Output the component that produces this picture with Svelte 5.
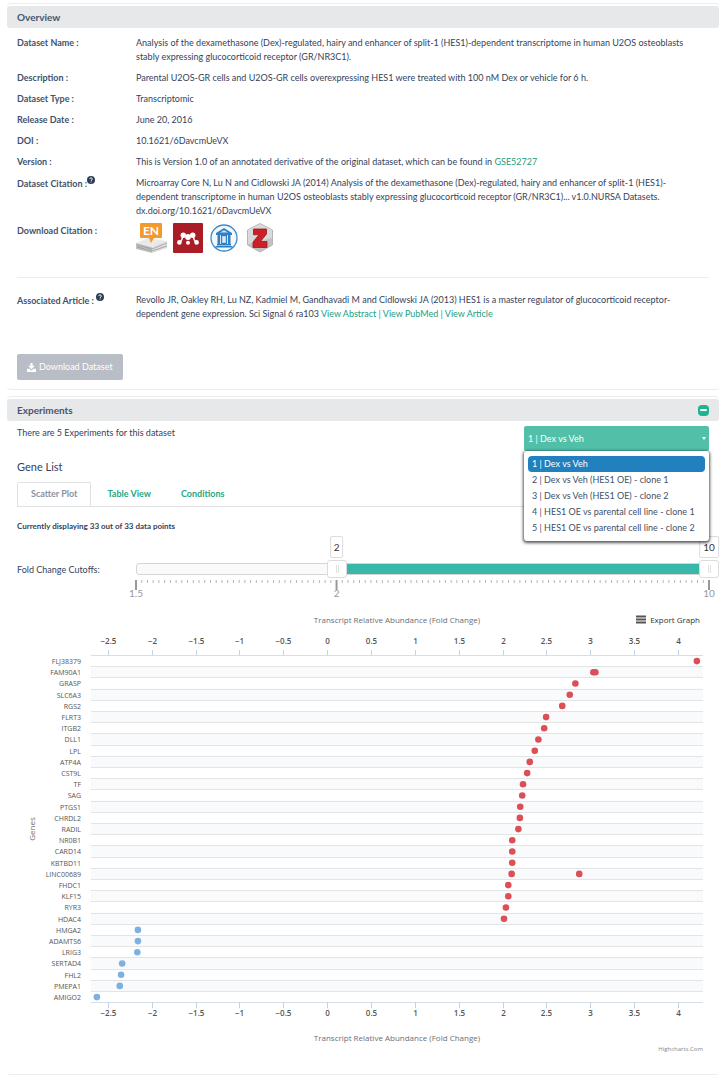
<script>
  let chartWidth = $state(691);
  let low = $state(35);
  let high = $state(100);
  let selected = $state(0);
  let tab = $state(0);
  let open = $state(true);

  const experiments = [
    '1 | Dex vs Veh',
    '2 | Dex vs Veh (HES1 OE) - clone 1',
    '3 | Dex vs Veh (HES1 OE) - clone 2',
    '4 | HES1 OE vs parental cell line - clone 1',
    '5 | HES1 OE vs parental cell line - clone 2'
  ];
  const tabs = ['Scatter Plot', 'Table View', 'Conditions'];

  const genes = [
    ['FLJ38379', [4.21]], ['FAM90A1', [3.03, 3.053]], ['GRASP', [2.825]], ['SLC6A3', [2.761]],
    ['RGS2', [2.675]], ['FLRT3', [2.491]], ['ITGB2', [2.469]], ['DLL1', [2.403]],
    ['LPL', [2.362]], ['ATP4A', [2.305]], ['CST9L', [2.275]], ['TF', [2.228]],
    ['SAG', [2.219]], ['PTGS1', [2.196]], ['CHRDL2', [2.192]], ['RADIL', [2.175]],
    ['NR0B1', [2.105]], ['CARD14', [2.105]], ['KBTBD11', [2.105]], ['LINC00689', [2.098, 2.869]],
    ['FHDC1', [2.06]], ['KLF15', [2.06]], ['RYR3', [2.033]], ['HDAC4', [2.011]],
    ['HMGA2', [-2.163]], ['ADAMTS6', [-2.163]], ['LRIG3', [-2.17]], ['SERTAD4', [-2.343]],
    ['FHL2', [-2.355]], ['PMEPA1', [-2.37]], ['AMIGO2', [-2.631]]
  ];
  const ticks = [-2.5, -2, -1.5, -1, -0.5, 0, 0.5, 1, 1.5, 2, 2.5, 3, 3.5, 4];
  const min = -2.698;
  const max = 4.28;
  const plotLeft = 74;
  const plotTop = 45;
  const rowHeight = 11.2;
  const plotBottom = plotTop + rowHeight * genes.length;

  let plotRight = $derived(chartWidth - 6);
  const x = (v, right) => plotLeft + ((v - min) / (max - min)) * (right - plotLeft);
  const label = (v) => String(v).replace('-', '−');
  const fold = (p) => (p <= 35 ? 1.5 + (p / 35) * 0.5 : 2 + ((p - 35) / 65) * 8);
  const short = (v) => String(Math.round(v * 10) / 10);
  const marks = Array.from({ length: 101 }, (_, i) => i);
</script>

{#snippet help()}
  <svg class="help" viewBox="0 0 16 16" aria-hidden="true">
    <circle cx="8" cy="8" r="8" fill="#2b3c55" />
    <path d="M5.4 6.2C5.4 3 10.7 3 10.7 6.1C10.7 8 8.2 8 8.2 9.8M8.2 11.2V13" fill="none" stroke="#fff" stroke-width="2" />
  </svg>
{/snippet}

<main>
  <section class="card">
    <header><h2>Overview</h2></header>
    <div class="body overview">
      <dl>
        <dt>Dataset Name :</dt>
        <dd>Analysis of the dexamethasone (Dex)-regulated, hairy and enhancer of split-1 (HES1)-dependent transcriptome in human U2OS osteoblasts stably expressing glucocorticoid receptor (GR/NR3C1).</dd>
        <dt>Description :</dt>
        <dd>Parental U2OS-GR cells and U2OS-GR cells overexpressing HES1 were treated with 100 nM Dex or vehicle for 6 h.</dd>
        <dt>Dataset Type :</dt>
        <dd>Transcriptomic</dd>
        <dt>Release Date :</dt>
        <dd>June 20, 2016</dd>
        <dt>DOI :</dt>
        <dd>10.1621/6DavcmUeVX</dd>
        <dt>Version :</dt>
        <dd>This is Version 1.0 of an annotated derivative of the original dataset, which can be found in <a href="#gse">GSE52727</a></dd>
        <dt>Dataset Citation :{@render help()}</dt>
        <dd>Microarray Core N, Lu N and Cidlowski JA (2014) Analysis of the dexamethasone (Dex)-regulated, hairy and enhancer of split-1 (HES1)-dependent transcriptome in human U2OS osteoblasts stably expressing glucocorticoid receptor (GR/NR3C1)... v1.0.NURSA Datasets. dx.doi.org/10.1621/6DavcmUeVX</dd>
      </dl>
      <dl class="downloads">
        <dt>Download Citation :</dt>
        <dd class="formats">
          <a href="#endnote" aria-label="EndNote">
            <svg viewBox="0 0 32 32">
              <path d="M0 21L12 16L31 19L19 25Z" fill="#e9e9e9" />
              <path d="M0 21L16 25V31L0 27Z" fill="#bfc0c1" />
              <path d="M16 25L31 19V26L16 31Z" fill="#dededf" />
              <path d="M1 23L16 27L31 21M1 25L16 29L31 24" fill="none" stroke="#929394" stroke-width="0.7" />
              <path d="M5 1H25Q26 1 26 2V15Q26 16 25 16H18L15 21L13 16H5Q4 16 4 15V2Q4 1 5 1Z" fill="#f49a2c" />
              <text x="15" y="12.6" text-anchor="middle" font-size="12" font-weight="700" fill="#fff">EN</text>
            </svg>
          </a>
          <a href="#mendeley" aria-label="Mendeley">
            <svg viewBox="0 0 32 32">
              <rect x="1" y="1" width="30" height="30" rx="1" fill="#aa1c26" />
              <path d="M7.6 20.5Q10.4 18.5 10.6 13.5M21.4 13.5Q21.6 18.5 24.4 20.5" fill="none" stroke="#fff" stroke-width="1.5" />
              <circle cx="11.3" cy="13.2" r="2.7" fill="#fff" /><circle cx="20.7" cy="13.2" r="2.7" fill="#fff" />
              <circle cx="16" cy="15" r="2.9" fill="#fff" />
              <circle cx="7.4" cy="20.4" r="2.3" fill="#fff" /><circle cx="16" cy="20.8" r="2" fill="#fff" /><circle cx="24.6" cy="20.4" r="2.3" fill="#fff" />
            </svg>
          </a>
          <a href="#papers" aria-label="Papers">
            <svg viewBox="0 0 32 32">
              <circle cx="16" cy="16" r="13" fill="#f3f9fd" stroke="#3f8ccb" stroke-width="1.3" />
              <path d="M8 11L16 6L24 11V13H8ZM9 22H23V23.5H9ZM7.5 24H24.5V25.5H7.5ZM9.5 13H12V22H9.5ZM20 13H22.5V22H20Z" fill="#2f7fc3" />
              <rect x="13.5" y="13.5" width="5" height="8" fill="#d4e8f6" stroke="#2f7fc3" stroke-width="1.3" />
              <path d="M12 10.6L16 8.2L20 10.6Z" fill="#d4e8f6" />
            </svg>
          </a>
          <a href="#zotero" aria-label="Zotero">
            <svg viewBox="0 0 32 32">
              <path d="M16 1.5L28.5 8V23L16 30L3.5 23V8Z" fill="#c0c2c4" stroke="#a9abae" stroke-width="0.8" />
              <path d="M16 2L28 8V16L4 22V8Z" fill="#d9dadc" />
              <path d="M9.5 7H22.5V12L16.5 19.5H23V25.5H9V20L15 12.8H9.5Z" fill="#cd1f27" stroke="#9e161c" stroke-width="0.8" />
            </svg>
          </a>
        </dd>
      </dl>
      <hr />
      <dl>
        <dt>Associated Article : {@render help()}</dt>
        <dd>Revollo JR, Oakley RH, Lu NZ, Kadmiel M, Gandhavadi M and Cidlowski JA (2013) HES1 is a master regulator of glucocorticoid receptor-dependent gene expression. Sci Signal 6 ra103 <a href="#abstract">View Abstract</a> <a href="#pubmed">| View PubMed</a> <a href="#article">| View Article</a></dd>
      </dl>
      <button class="download" type="button">
        <svg viewBox="0 0 16 16" aria-hidden="true">
          <path d="M6 0H10V5H14L8 11L2 5H6ZM0 10H4.5L8 13.3L11.5 10H16V16H0Z" fill="#fff" />
        </svg>
        Download Dataset
      </button>
    </div>
  </section>

  <section class="card">
    <header>
      <h2>Experiments</h2>
      <button class="collapse" type="button" aria-label="Collapse"></button>
    </header>
    <div class="body experiments">
      <div class="picker-row">
        <p>There are 5 Experiments for this dataset</p>
        <div class="picker">
          <select aria-label="Experiment" bind:value={selected}>
            {#each experiments as name, i}
              <option value={i}>{name}</option>
            {/each}
          </select>
          {#if open}
            <ul role="listbox" aria-label="Experiments">
              {#each experiments as name, i}
                <li role="option" aria-selected={selected === i}>
                  <button type="button" class:active={selected === i} onclick={() => (selected = i)}>{name}</button>
                </li>
              {/each}
            </ul>
          {/if}
        </div>
      </div>
      <h3>Gene List</h3>
      <nav>
        {#each tabs as name, i}
          <button type="button" class:current={tab === i} onclick={() => (tab = i)}>{name}</button>
        {/each}
      </nav>
      <p class="count">Currently displaying 33 out of 33 data points</p>

      <div class="cutoffs">
        <span id="cutoff">Fold Change Cutoffs:</span>
        <div class="slider">
          <div class="track"><div class="fill" style="left: {low}%; width: {high - low}%"></div></div>
          <input type="range" min="0" max="100" bind:value={low} aria-labelledby="cutoff" />
          <input type="range" min="0" max="100" bind:value={high} aria-labelledby="cutoff" />
          <output style="left: {low}%">{short(fold(low))}</output>
          <output style="left: {high}%">{short(fold(high))}</output>
          <svg class="scale" aria-hidden="true">
            {#each marks as m}
              {@const big = m === 0 || m === 35 || m === 100}
              <line x1="{m}%" x2="{m}%" y1="0" y2={big ? 10 : 3} stroke={big ? '#999' : '#b5b5b5'} stroke-width={big ? 2 : 1} />
            {/each}
            <text x="0%" y="17">1.5</text>
            <text x="35%" y="17">2</text>
            <text x="100%" y="17">10</text>
          </svg>
        </div>
      </div>

      <div class="chart" bind:clientWidth={chartWidth}>
        <svg width="100%" height="448" role="img" aria-label="Fold change by gene">
          {#each genes as [gene], i}
            {@const top = plotTop + i * rowHeight}
            {#if i % 2}
              <rect x={plotLeft} y={top} width={plotRight - plotLeft} height={rowHeight} fill="#f9fafc" />
            {/if}
            {#if i}
              <line x1={plotLeft} x2={plotRight} y1={Math.round(top) + 0.5} y2={Math.round(top) + 0.5} stroke="#e3e4e6" />
            {/if}
            <text class="gene" x="64" y={top + 9}>{gene}</text>
          {/each}
          {#each [plotTop, Math.round(plotBottom)] as edge}
            <line x1={plotLeft} x2={plotRight} y1={edge + 0.5} y2={edge + 0.5} stroke="#d5deea" />
          {/each}
          {#each ticks as t}
            {@const tx = Math.floor(x(t, plotRight)) + 0.5}
            <line x1={tx} x2={tx} y1={plotTop - 5} y2={plotTop} stroke="#c5d2e3" />
            <line x1={tx} x2={tx} y1={plotBottom} y2={plotBottom + 6} stroke="#c5d2e3" />
            <text class="tick" x={tx} y="34">{label(t)}</text>
            <text class="tick" x={tx} y={plotBottom + 14}>{label(t)}</text>
          {/each}
          {#each genes as [, values], i}
            {#each values as v}
              <circle cx={x(v, plotRight)} cy={plotTop + (i + 0.5) * rowHeight + 0.5} r="3.3" fill={v > 0 ? '#db5056' : '#7eb1e1'} />
            {/each}
          {/each}
          <text class="axis" x={(plotLeft + plotRight) / 2} y="13">Transcript Relative Abundance (Fold Change)</text>
          <text class="axis" x={(plotLeft + plotRight) / 2} y="431">Transcript Relative Abundance (Fold Change)</text>
          <text class="axis" transform="translate(18 219) rotate(-90)">Genes</text>
          <path d="M{chartWidth - 73} 6.5h10m-10 3h10m-10 3h10" stroke="#555" stroke-width="2" />
          <text class="export" x={chartWidth - 9} y="13">Export Graph</text>
          <text class="credit" x={plotRight} y="441">Highcharts.Com</text>
        </svg>
      </div>
    </div>
  </section>
</main>

<style>
  :global(body) { background: #fff; }
  main {
    display: flex;
    flex-direction: column;
    gap: 6px;
    padding: 3px 6px 6px 7px;
    font: 9px/14px Lato, sans-serif;
    color: #34435c;
  }
  .card {
    border-top: 1px solid #ececee;
    border-bottom: 1px solid #ececee;
    border-radius: 4px;
    padding-top: 2px;
  }
  header {
    display: flex;
    align-items: center;
    justify-content: space-between;
    height: 22px;
    padding: 0 10px;
    border-radius: 3px;
    background: #e7e8ea;
  }
  h2, h3, p, dl, dd, ul { margin: 0; padding: 0; }
  h2 { font-size: 10px; line-height: 14px; font-weight: 700; color: #47566a; }
  h3 { margin-top: 3px; font-size: 11px; line-height: 16px; font-weight: 400; }
  .body { padding: 0 10px; }
  .overview { padding-top: 8px; padding-bottom: 9px; }
  .experiments { padding-bottom: 16px; }
  dl {
    display: grid;
    grid-template-columns: 119px 1fr;
    row-gap: 7px;
  }
  .downloads { margin-top: 4px; }
  .downloads dt { padding-top: 2px; }
  dd { padding-right: 16px; }
  dt { font-weight: 700; color: #42536b; }
  a { color: #1d9d80; text-decoration: none; }
  .help { width: 8px; height: 8px; vertical-align: 3px; }
  .formats { display: flex; gap: 4px; }
  .formats svg { display: block; width: 32px; height: 32px; }
  hr { margin: 23px 0 15px; border: 0; border-top: 1px solid #ececee; }
  button { font: inherit; border: 0; cursor: pointer; }
  .download {
    display: flex;
    align-items: center;
    gap: 3px;
    height: 26px;
    margin-top: 33px;
    padding: 0 10px;
    border-radius: 2px;
    background: #b9bdc5;
    color: #fff;
  }
  .download svg { width: 9px; height: 9px; }
  .collapse {
    width: 11px;
    height: 11px;
    padding: 2px;
    border-radius: 4px;
    background: #1fb394;
  }
  .collapse::before {
    content: '';
    display: block;
    height: 2px;
    border-radius: 1px;
    background: #fff;
  }
  .picker-row { display: flex; justify-content: space-between; height: 30px; padding-top: 5px; }
  .picker { position: relative; width: 185px; }
  select {
    appearance: none;
    display: block;
    width: 100%;
    height: 25px;
    padding: 0 4px;
    border: 0;
    border-radius: 2px;
    background: #52c0a9;
    font: inherit;
    color: #fff;
  }
  .picker::after {
    content: '';
    position: absolute;
    right: 3px;
    top: 11px;
    border: 2px solid transparent;
    border-top: 3px solid #fff;
  }
  ul {
    position: absolute;
    z-index: 3;
    top: 25px;
    left: 0;
    right: 0;
    padding: 5px 4px;
    border-radius: 3px;
    background: #fff;
    box-shadow: 0 1px 3px 1px rgba(0, 0, 0, 0.65);
    list-style: none;
  }
  ul button {
    display: block;
    width: 100%;
    height: 16px;
    padding: 0 4px;
    border-radius: 4px;
    background: none;
    text-align: left;
    white-space: nowrap;
    color: #42506a;
  }
  ul button.active { background: #2180bd; color: #fff; }
  nav { display: flex; gap: 2px; height: 24px; margin-top: 7px; border-bottom: 1px solid #dfe1e3; }
  nav button {
    height: 24px;
    padding: 0 13px 2px;
    border: 1px solid transparent;
    border-bottom: 0;
    background: none;
    font-weight: 700;
    color: #1fa884;
  }
  nav button.current {
    border-color: #dfe1e3;
    border-radius: 2px 2px 0 0;
    background: #fff;
    color: #8a93a2;
  }
  .count { margin-top: 13px; font-size: 8px; line-height: 12px; font-weight: 700; }
  .cutoffs { display: grid; grid-template-columns: 119px 1fr; margin-top: 31px; height: 42px; }
  .slider { position: relative; }
  .track {
    height: 12px;
    box-sizing: border-box;
    border: 1px solid #d6d6d6;
    border-radius: 3px;
    background: #fafafa;
    position: relative;
  }
  .fill { position: absolute; top: 0; bottom: 0; background: #38b8aa; }
  input {
    appearance: none;
    position: absolute;
    left: -10px;
    top: -3px;
    width: calc(100% + 20px);
    height: 18px;
    margin: 0;
    background: none;
    pointer-events: none;
  }
  input::-webkit-slider-thumb {
    appearance: none;
    box-sizing: border-box;
    width: 20px;
    height: 18px;
    border: 1px solid #dcdcdc;
    border-radius: 3px;
    padding: 4px 0;
    background: linear-gradient(90deg, transparent 8px, #e0e0e0 8px 9px, transparent 9px 10px, #e0e0e0 10px 11px, transparent 11px) content-box, #fff;
    pointer-events: auto;
    cursor: pointer;
  }
  output {
    position: absolute;
    top: -27px;
    transform: translateX(-50%);
    padding: 3px;
    border: 1px solid #dcdcdc;
    border-radius: 2px;
    background: #fff;
    font-size: 10px;
    line-height: 14px;
    color: #333;
  }
  .scale { position: absolute; left: 0; top: 17px; width: 100%; height: 22px; overflow: visible; }
  .scale text { text-anchor: middle; font-size: 10px; fill: #999; }
  .chart { margin-top: 5px; }
  .chart svg { display: block; }
  .chart text { font-family: "Open Sans", sans-serif; fill: #555; }
  .chart .gene { font-size: 7px; text-anchor: end; }
  .chart .tick { font-size: 8px; text-anchor: middle; font-weight: 600; }
  .chart .axis { font-size: 8px; text-anchor: middle; fill: #6d6d75; }
  .chart .export { font-size: 8px; text-anchor: end; fill: #333; }
  .chart .credit { font-size: 6px; text-anchor: end; fill: #888; }
</style>
